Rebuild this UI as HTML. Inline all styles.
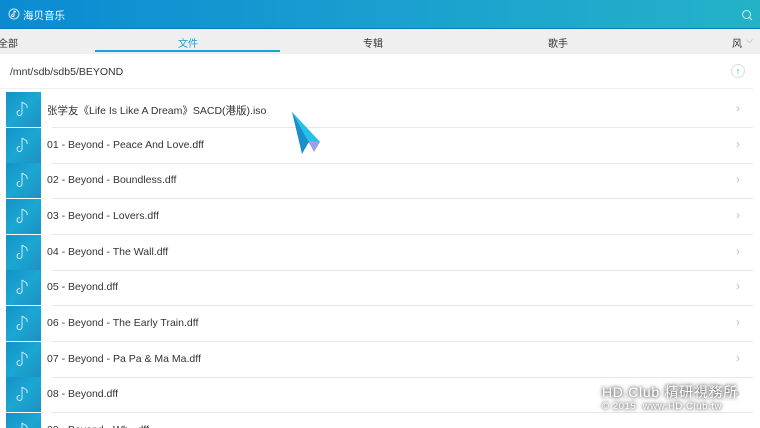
<!DOCTYPE html>
<html style="overflow:hidden;width:760px;height:428px"><head><meta charset="utf-8"><style>
*{margin:0;padding:0;box-sizing:border-box}
body{width:760px;height:428px;overflow:hidden;background:#fff;font-family:"Liberation Sans","Noto Sans CJK SC",sans-serif;position:relative}
.hdr{position:absolute;left:0;top:0;width:760px;height:29px;background:linear-gradient(90deg,#0b8ad2 0%,#1a9fd0 50%,#24b2c8 100%);border-bottom:1px solid #0a78b5}
.hdr .t{position:absolute;left:23px;top:8px;color:#fff;font-size:10.5px}
.tabs{position:absolute;left:0;top:29px;width:760px;height:25px;background:#efefef}
.tabs span{position:absolute;top:6px;font-size:10px;color:#333}
.ul{position:absolute;left:95px;top:50px;width:185px;height:2px;background:#1aa3d6}
.path{position:absolute;left:10px;top:66px;font-size:10.5px;color:#333}
.up{position:absolute;left:731px;top:64px;width:14px;height:14px;border:1px solid #ddd;border-radius:50%;color:#1aa3d6;font-size:9px;text-align:center;line-height:12px}
.row{position:absolute;left:0;width:760px;height:36px;overflow:hidden}
.th{position:absolute;left:6px;top:0;width:35px;height:35px;background:linear-gradient(135deg,#1591c8 0%,#1ba7d2 50%,#1c90c4 100%)}
.th svg{position:absolute;left:10px;top:8px}
.row .n{position:absolute;left:47px;top:11px;font-size:10.5px;color:#333;white-space:nowrap}
.row .ar{position:absolute;left:736px;top:9px;color:#bbb;font-size:12px}
.row .ln{position:absolute;left:52px;top:35px;width:701px;height:1px;background:#e8e8e8}
.wm{position:absolute;left:602px;top:382px;color:#fff;text-shadow:0 0 3px #555,0 0 5px #666;font-family:"Liberation Sans","Noto Sans CJK TC",sans-serif}
</style></head><body>
<div class="hdr">
<svg style="position:absolute;left:8px;top:8px" width="12" height="12" viewBox="0 0 12 12"><circle cx="6" cy="6" r="5" fill="none" stroke="#cfe8f5" stroke-width="1"/><path d="M6 3v4.5a1.2 1.2 0 1 1-1-1.2M6 3l2 1" fill="none" stroke="#fff" stroke-width="1"/></svg>
<div class="t">海贝音乐</div>
<svg style="position:absolute;left:741px;top:9px" width="12" height="12" viewBox="0 0 12 12"><circle cx="5.5" cy="5.5" r="4" fill="none" stroke="#cfeef5" stroke-width="1"/><path d="M8.5 8.5l2.5 2.5" stroke="#cfeef5" stroke-width="1"/></svg>
</div>
<div class="tabs">
<span style="left:-2px">全部</span>
<span style="left:178px;color:#1aa3d6">文件</span>
<span style="left:363px">专辑</span>
<span style="left:548px">歌手</span>
<span style="left:732px">风</span>
<span style="left:746px;color:#999;top:6px;font-size:9px">⌵</span>
</div>
<div class="ul"></div>
<div class="path">/mnt/sdb/sdb5/BEYOND</div>
<div class="up">↑</div>
<div style="position:absolute;left:0;top:88px;width:753px;height:1px;background:#eee"></div>

<div class="row" style="top:92px"><div class="th"><svg width="15" height="18" viewBox="0 0 15 18"><path d="M6 2v11a2.5 2.5 0 1 1-2-2.4M6 2c2 2 6 2 5 6" fill="none" stroke="#cde9f5" stroke-width="1"/></svg></div><div class="n">张学友《Life Is Like A Dream》SACD(港版).iso</div><div class="ar">›</div><div class="ln"></div></div>
<div class="row" style="top:128px"><div class="th"><svg width="15" height="18" viewBox="0 0 15 18"><path d="M6 2v11a2.5 2.5 0 1 1-2-2.4M6 2c2 2 6 2 5 6" fill="none" stroke="#cde9f5" stroke-width="1"/></svg></div><div class="n">01 - Beyond - Peace And Love.dff</div><div class="ar">›</div><div class="ln"></div></div>
<div class="row" style="top:163px"><div class="th"><svg width="15" height="18" viewBox="0 0 15 18"><path d="M6 2v11a2.5 2.5 0 1 1-2-2.4M6 2c2 2 6 2 5 6" fill="none" stroke="#cde9f5" stroke-width="1"/></svg></div><div class="n">02 - Beyond - Boundless.dff</div><div class="ar">›</div><div class="ln"></div></div>
<div class="row" style="top:199px"><div class="th"><svg width="15" height="18" viewBox="0 0 15 18"><path d="M6 2v11a2.5 2.5 0 1 1-2-2.4M6 2c2 2 6 2 5 6" fill="none" stroke="#cde9f5" stroke-width="1"/></svg></div><div class="n">03 - Beyond - Lovers.dff</div><div class="ar">›</div><div class="ln"></div></div>
<div class="row" style="top:235px"><div class="th"><svg width="15" height="18" viewBox="0 0 15 18"><path d="M6 2v11a2.5 2.5 0 1 1-2-2.4M6 2c2 2 6 2 5 6" fill="none" stroke="#cde9f5" stroke-width="1"/></svg></div><div class="n">04 - Beyond - The Wall.dff</div><div class="ar">›</div><div class="ln"></div></div>
<div class="row" style="top:270px"><div class="th"><svg width="15" height="18" viewBox="0 0 15 18"><path d="M6 2v11a2.5 2.5 0 1 1-2-2.4M6 2c2 2 6 2 5 6" fill="none" stroke="#cde9f5" stroke-width="1"/></svg></div><div class="n">05 - Beyond.dff</div><div class="ar">›</div><div class="ln"></div></div>
<div class="row" style="top:306px"><div class="th"><svg width="15" height="18" viewBox="0 0 15 18"><path d="M6 2v11a2.5 2.5 0 1 1-2-2.4M6 2c2 2 6 2 5 6" fill="none" stroke="#cde9f5" stroke-width="1"/></svg></div><div class="n">06 - Beyond - The Early Train.dff</div><div class="ar">›</div><div class="ln"></div></div>
<div class="row" style="top:342px"><div class="th"><svg width="15" height="18" viewBox="0 0 15 18"><path d="M6 2v11a2.5 2.5 0 1 1-2-2.4M6 2c2 2 6 2 5 6" fill="none" stroke="#cde9f5" stroke-width="1"/></svg></div><div class="n">07 - Beyond - Pa Pa &amp; Ma Ma.dff</div><div class="ar">›</div><div class="ln"></div></div>
<div class="row" style="top:377px"><div class="th"><svg width="15" height="18" viewBox="0 0 15 18"><path d="M6 2v11a2.5 2.5 0 1 1-2-2.4M6 2c2 2 6 2 5 6" fill="none" stroke="#cde9f5" stroke-width="1"/></svg></div><div class="n">08 - Beyond.dff</div><div class="ar">›</div><div class="ln"></div></div>
<div class="row" style="top:413px;height:15px"><div class="th"><svg width="15" height="18" viewBox="0 0 15 18"><path d="M6 2v11a2.5 2.5 0 1 1-2-2.4M6 2c2 2 6 2 5 6" fill="none" stroke="#cde9f5" stroke-width="1"/></svg></div><div class="n">09 - Beyond - Wh...dff</div></div>

<svg style="position:absolute;left:290px;top:112px" width="36" height="44" viewBox="0 0 36 44"><polygon points="2,0 30,30 20,28 12,42" fill="#1b8fcc"/><polygon points="2,0 30,30 18,29" fill="#26c2e6"/><polygon points="18,29 30,30 24,40" fill="#3a3fd0" opacity=".5"/></svg>

<div class="wm"><div style="font-size:14px;letter-spacing:.7px">HD.Club 精研視務所</div><div style="font-size:9.5px;letter-spacing:.6px;margin-top:-1px">© 2015&nbsp; www.HD.Club.tw</div></div>
</body></html>
